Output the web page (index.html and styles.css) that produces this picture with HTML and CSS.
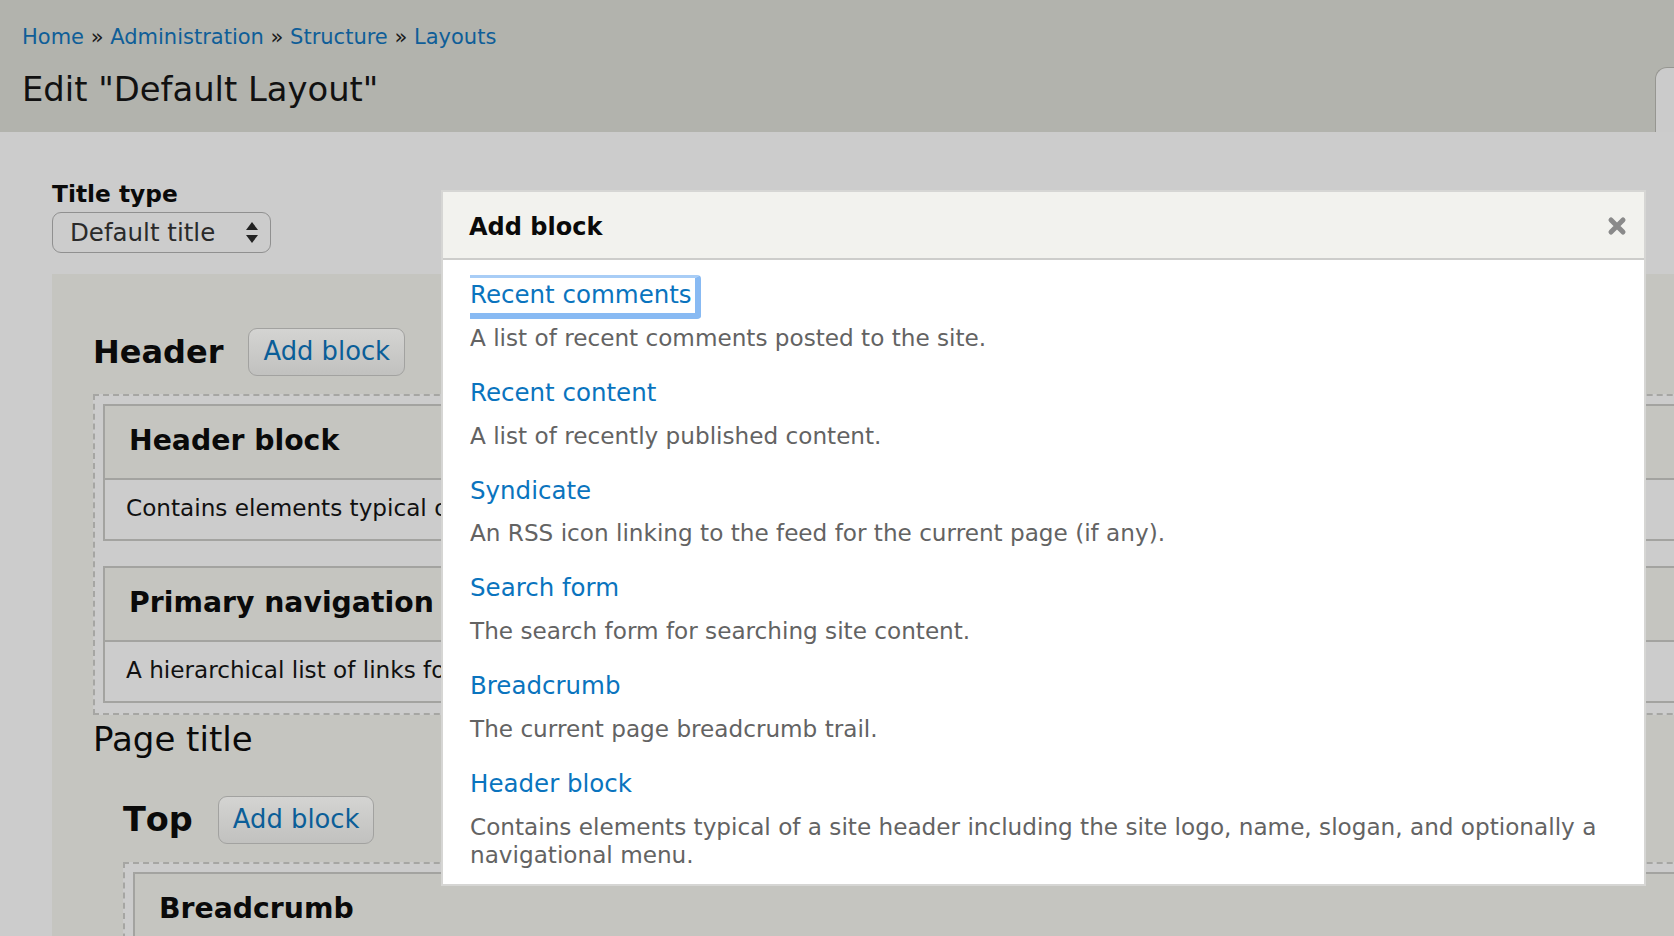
FILE: index.html
```html
<!DOCTYPE html>
<html lang="en">
<head>
<meta charset="utf-8">
<title>Edit "Default Layout"</title>
<link rel="stylesheet" href="styles.css">
</head>
<body>
<div class="topbar">
  <div class="crumbs"><a class="crumb">Home</a> » <a class="crumb">Administration</a> » <a class="crumb">Structure</a> » <a class="crumb">Layouts</a></div>
  <h1 class="page-title">Edit "Default Layout"</h1>
  <div class="tab"></div>
</div>

<div class="main">
  <div class="field-label">Title type</div>
  <div class="select">
    <span class="select-text">Default title</span>
    <svg class="select-arrows" width="12" height="22" viewBox="0 0 12 22"><polygon points="0,8 6,0 12,8" fill="#222"/><polygon points="0,13 12,13 6,21" fill="#222"/></svg>
  </div>

  <div class="panel">
    <div class="region">
      <div class="region-head"><h2 class="region-title">Header</h2><span class="btn">Add block</span></div>
      <div class="blocks">
        <div class="block">
          <div class="block-title">Header block</div>
          <div class="block-body">Contains elements typical of a site header including the site logo, name, slogan, and optionally a navigational menu.</div>
        </div>
        <div class="block">
          <div class="block-title">Primary navigation</div>
          <div class="block-body">A hierarchical list of links for the primary navigation of the site.</div>
        </div>
      </div>
    </div>

    <div class="plain-title">Page title</div>

    <div class="region region-nested">
      <div class="region-head"><h2 class="region-title region-title-top">Top</h2><span class="btn">Add block</span></div>
      <div class="blocks">
        <div class="block">
          <div class="block-title">Breadcrumb</div>
          <div class="block-body">The current page breadcrumb trail.</div>
        </div>
      </div>
    </div>
  </div>
</div>

<div class="modal">
  <div class="modal-head">
    <span class="modal-title">Add block</span>
    <svg class="modal-close" width="20" height="20" viewBox="0 0 20 20"><path d="M4 4 L16 16 M16 4 L4 16" stroke="#8a8a8a" stroke-width="5" stroke-linecap="round"/></svg>
  </div>
  <div class="modal-body">
    <div class="item">
      <a class="link focused">Recent comments</a>
      <div class="desc">A list of recent comments posted to the site.</div>
    </div>
    <div class="item">
      <a class="link">Recent content</a>
      <div class="desc">A list of recently published content.</div>
    </div>
    <div class="item">
      <a class="link">Syndicate</a>
      <div class="desc">An RSS icon linking to the feed for the current page (if any).</div>
    </div>
    <div class="item">
      <a class="link">Search form</a>
      <div class="desc">The search form for searching site content.</div>
    </div>
    <div class="item">
      <a class="link">Breadcrumb</a>
      <div class="desc">The current page breadcrumb trail.</div>
    </div>
    <div class="item">
      <a class="link">Header block</a>
      <div class="desc">Contains elements typical of a site header including the site logo, name, slogan, and optionally a navigational menu.</div>
    </div>
  </div>
</div>
</body>
</html>
```

FILE: styles.css
```css
html, body {
  margin: 0;
  padding: 0;
}
body {
  width: 1674px;
  height: 936px;
  overflow: hidden;
  position: relative;
  background: #cccccc;
  font-family: "DejaVu Sans", Verdana, sans-serif;
  color: #111;
}

/* top bar */
.topbar {
  position: relative;
  height: 132px;
  box-sizing: border-box;
  background: #b2b3ad;
  padding: 25px 0 0 22px;
}
.crumbs {
  font-size: 21px;
  line-height: 24px;
  color: #1a1a1a;
  white-space: nowrap;
}
.crumb {
  color: #0f5e98;
}
.page-title {
  margin: 21px 0 0 0;
  font-size: 33.8px;
  line-height: 40px;
  font-weight: normal;
  color: #111;
}
.tab {
  position: absolute;
  right: 0;
  top: 67px;
  bottom: 0;
  width: 18px;
  background: #cbcbcb;
  border-top: 1px solid #969691;
  border-left: 1px solid #969691;
  border-top-left-radius: 12px;
}

/* main */
.main {
  padding: 48px 0 0 52px;
}
.field-label {
  font-size: 23.3px;
  line-height: 28px;
  font-weight: bold;
  color: #0a0a0a;
}
.select {
  margin-top: 4px;
  box-sizing: border-box;
  width: 219px;
  height: 41px;
  border: 1px solid #909090;
  border-radius: 9px;
  display: flex;
  align-items: center;
  justify-content: space-between;
  padding: 0 12px 0 17px;
}
.select-text {
  font-size: 24.5px;
  color: #2a2a2a;
}
.select-arrows {
  display: block;
  margin-top: 1px;
}

.panel {
  margin-top: 21px;
  width: 1700px;
  background: #c5c5c0;
  padding: 54px 41px 200px 41px;
}

.region-head {
  display: flex;
  align-items: center;
  gap: 25px;
}
.region-title {
  margin: 0;
  font-size: 32px;
  line-height: 40px;
  font-weight: bold;
  color: #0a0a0a;
}
.region-title-top {
  font-size: 33.5px;
  font-kerning: none;
  margin-right: 0;
}
.btn {
  box-sizing: border-box;
  height: 48px;
  display: inline-flex;
  align-items: center;
  padding: 0 14px 2px 14px;
  border: 1px solid #a2a2a0;
  border-radius: 9px;
  background: linear-gradient(#d4d4d2, #c1c1bf);
  color: #0b5e98;
  font-size: 25.8px;
}

.blocks {
  margin-top: 18px;
  border: 2px dashed #a6a6a3;
  border-right: 0;
  background: #cccccc;
  padding: 8px 0 10px 8px;
}
.block {
  border: 2px solid #a3a3a0;
  border-right: 0;
}
.block + .block {
  margin-top: 25px;
}
.block-title {
  box-sizing: border-box;
  height: 74px;
  border-bottom: 2px solid #a3a3a0;
  background: #c5c5c0;
  display: flex;
  align-items: center;
  padding: 0 0 4px 24px;
  font-size: 28.3px;
  font-weight: bold;
  color: #0a0a0a;
  white-space: nowrap;
}
.block-body {
  box-sizing: border-box;
  height: 59px;
  display: flex;
  align-items: center;
  padding: 0 0 4px 21px;
  font-size: 23.15px;
  color: #111;
  white-space: nowrap;
  overflow: hidden;
}

.plain-title {
  margin-top: 4px;
  font-size: 34px;
  line-height: 40px;
  color: #0a0a0a;
}
.region-nested {
  margin-top: 37px;
  margin-left: 30px;
}

/* modal */
.modal {
  position: absolute;
  left: 441px;
  top: 190px;
  width: 1201px;
  border: 2px solid #d6d6d4;
  background: #ffffff;
}
.modal-head {
  box-sizing: border-box;
  height: 68px;
  background: #f2f2ee;
  border-bottom: 2px solid #cdcdcb;
  display: flex;
  align-items: center;
  justify-content: space-between;
  padding: 4px 17px 0 26px;
}
.modal-title {
  font-size: 24px;
  font-weight: bold;
  color: #0a0a0a;
}
.modal-close {
  display: block;
  margin-top: -3px;
}
.modal-body {
  padding: 20px 27px 15px 27px;
}
.item + .item {
  margin-top: 26px;
}
.link {
  display: inline-block;
  font-size: 24.5px;
  line-height: 30px;
  color: #0a74be;
}
.focused {
  position: relative;
}
.focused::after {
  content: "";
  position: absolute;
  left: 0;
  top: -5.5px;
  right: -9px;
  bottom: -8.5px;
  border: 3px solid #a8cdf6;
  border-left: 0;
  border-right: 6px solid #88baf3;
  border-bottom: 6px solid #88baf3;
  border-radius: 0 4px 4px 0;
}
.desc {
  margin-top: 13.8px;
  font-size: 23.15px;
  line-height: 28px;
  color: #636363;
}
```
